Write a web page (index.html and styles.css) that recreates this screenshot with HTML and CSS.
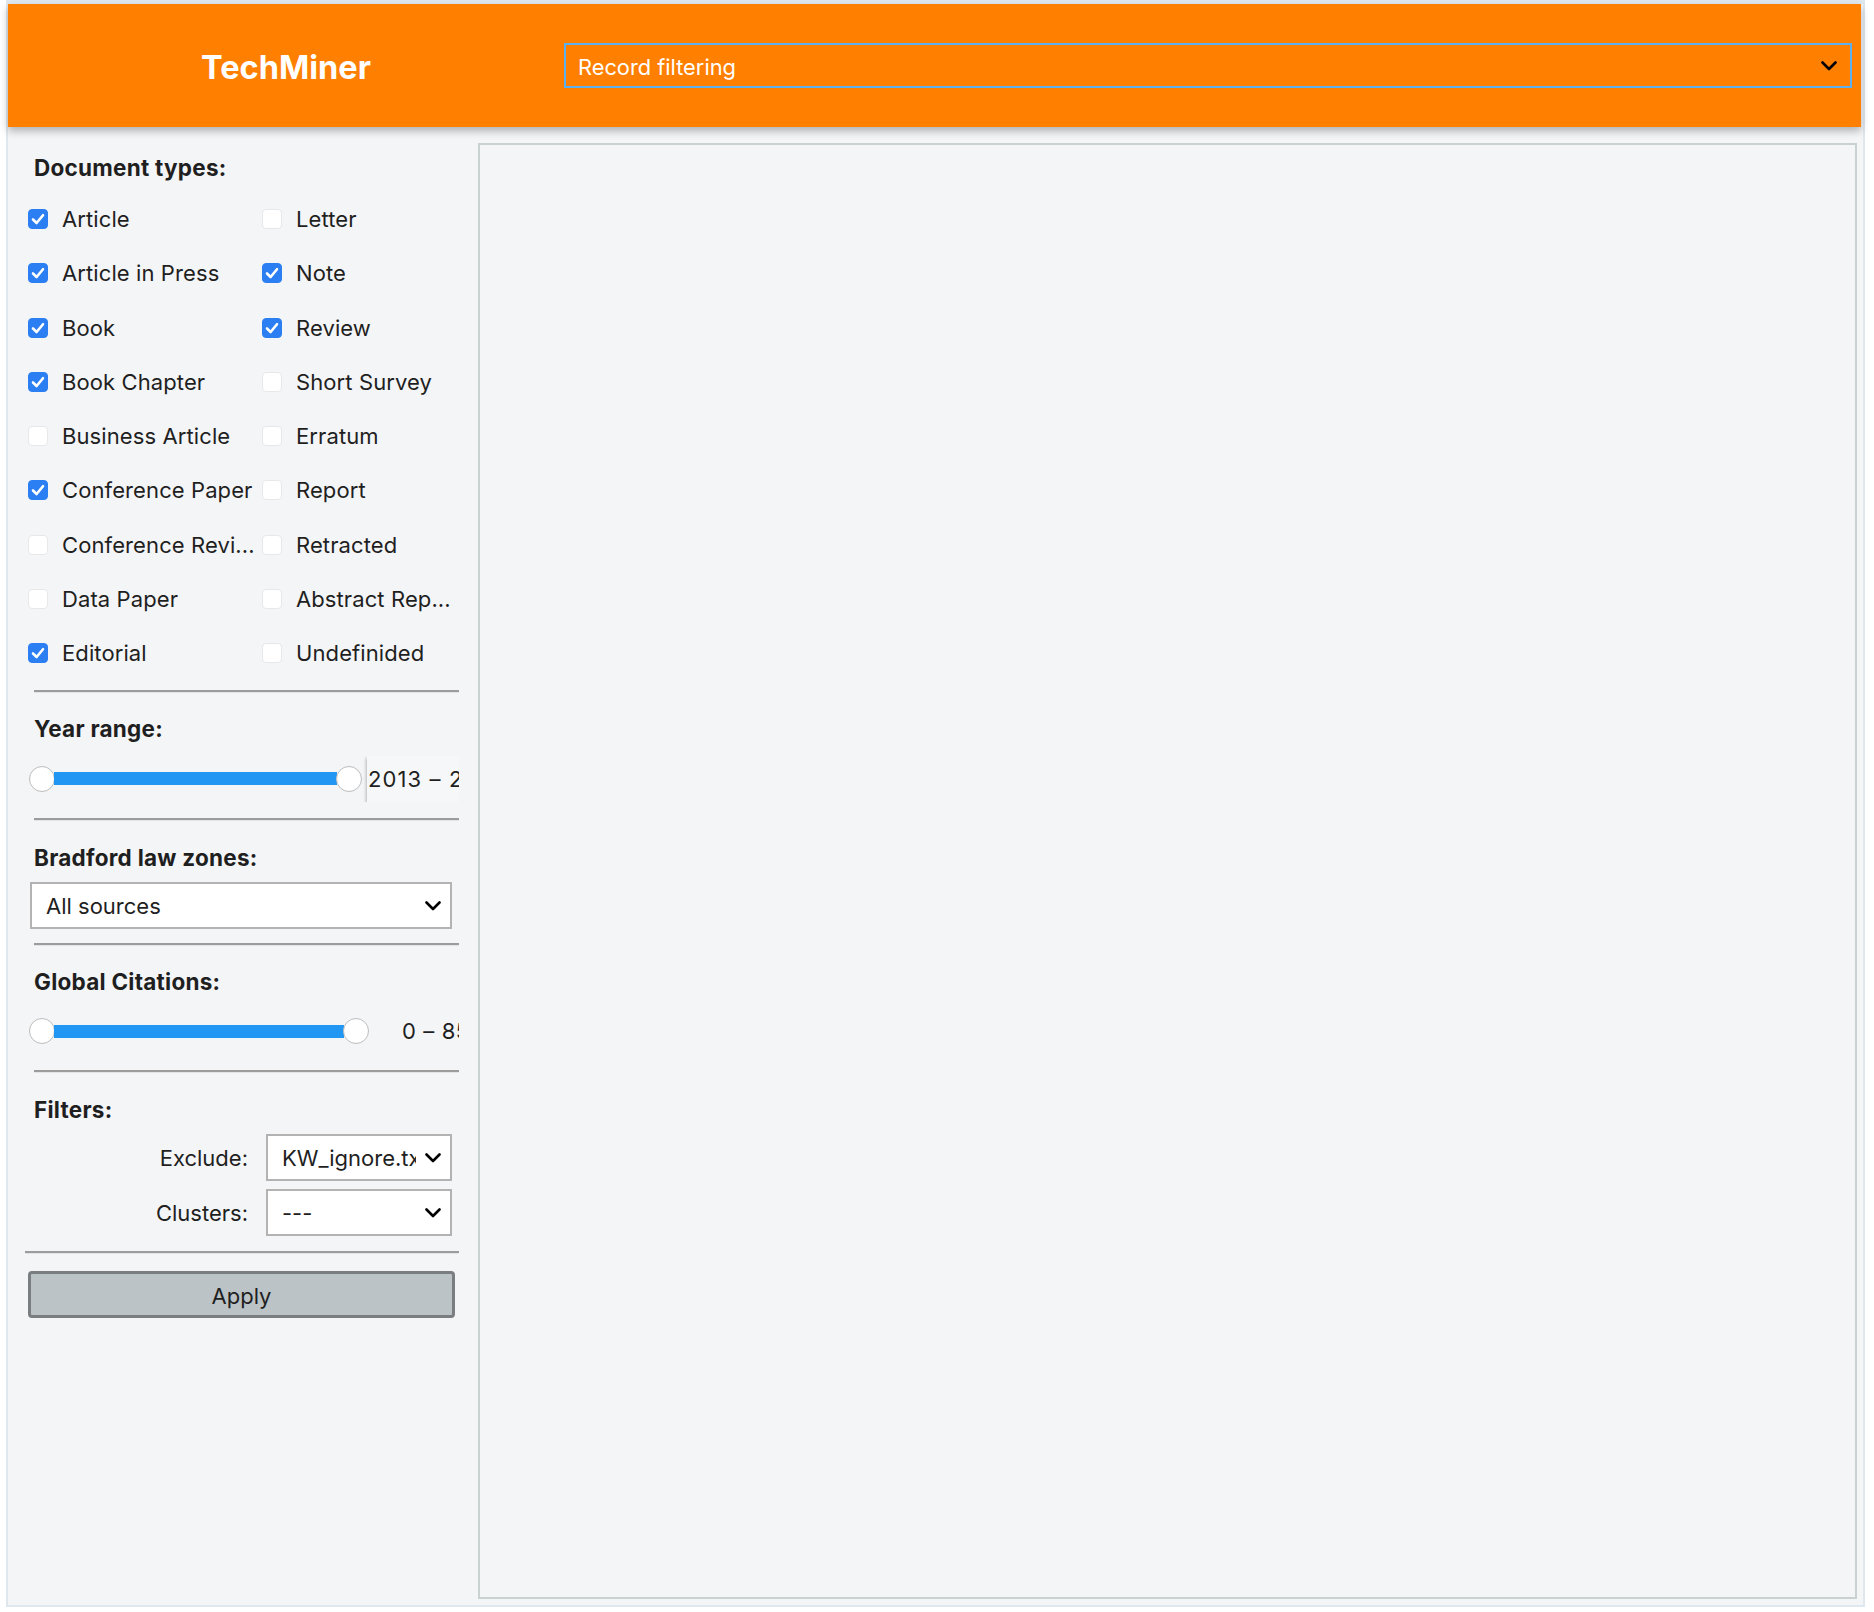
FILE: index.html
```html
<!DOCTYPE html>
<html lang="en">
<head>
<meta charset="utf-8">
<title>TechMiner</title>
<link rel="stylesheet" href="styles.css">
</head>
<body>
<div class="frame">
  <header class="header">
    <div class="brand">TechMiner</div>
    <div class="menu-select">
      <span class="menu-text">Record filtering</span>
      <svg class="chev" width="16" height="10" viewBox="0 0 16 10"><path d="M1.5 1.5 L8 8 L14.5 1.5" fill="none" stroke="#000" stroke-width="2.6" stroke-linecap="round" stroke-linejoin="round"/></svg>
    </div>
  </header>
  <div class="main">
    <aside class="sidebar">
      <div class="heading h-first">Document types:</div>
      <div class="types">
        <label class="opt"><span class="box on"><svg viewBox="0 0 20 20"><path d="M5 10.5 L8.6 14 L15 6.2" fill="none" stroke="#fff" stroke-width="2.6" stroke-linecap="round" stroke-linejoin="round"/></svg></span><span class="txt">Article</span></label>
        <label class="opt"><span class="box"></span><span class="txt">Letter</span></label>
        <label class="opt"><span class="box on"><svg viewBox="0 0 20 20"><path d="M5 10.5 L8.6 14 L15 6.2" fill="none" stroke="#fff" stroke-width="2.6" stroke-linecap="round" stroke-linejoin="round"/></svg></span><span class="txt">Article in Press</span></label>
        <label class="opt"><span class="box on"><svg viewBox="0 0 20 20"><path d="M5 10.5 L8.6 14 L15 6.2" fill="none" stroke="#fff" stroke-width="2.6" stroke-linecap="round" stroke-linejoin="round"/></svg></span><span class="txt">Note</span></label>
        <label class="opt"><span class="box on"><svg viewBox="0 0 20 20"><path d="M5 10.5 L8.6 14 L15 6.2" fill="none" stroke="#fff" stroke-width="2.6" stroke-linecap="round" stroke-linejoin="round"/></svg></span><span class="txt">Book</span></label>
        <label class="opt"><span class="box on"><svg viewBox="0 0 20 20"><path d="M5 10.5 L8.6 14 L15 6.2" fill="none" stroke="#fff" stroke-width="2.6" stroke-linecap="round" stroke-linejoin="round"/></svg></span><span class="txt">Review</span></label>
        <label class="opt"><span class="box on"><svg viewBox="0 0 20 20"><path d="M5 10.5 L8.6 14 L15 6.2" fill="none" stroke="#fff" stroke-width="2.6" stroke-linecap="round" stroke-linejoin="round"/></svg></span><span class="txt">Book Chapter</span></label>
        <label class="opt"><span class="box"></span><span class="txt">Short Survey</span></label>
        <label class="opt"><span class="box"></span><span class="txt">Business Article</span></label>
        <label class="opt"><span class="box"></span><span class="txt">Erratum</span></label>
        <label class="opt"><span class="box on"><svg viewBox="0 0 20 20"><path d="M5 10.5 L8.6 14 L15 6.2" fill="none" stroke="#fff" stroke-width="2.6" stroke-linecap="round" stroke-linejoin="round"/></svg></span><span class="txt">Conference Paper</span></label>
        <label class="opt"><span class="box"></span><span class="txt">Report</span></label>
        <label class="opt"><span class="box"></span><span class="txt">Conference Revi...</span></label>
        <label class="opt"><span class="box"></span><span class="txt">Retracted</span></label>
        <label class="opt"><span class="box"></span><span class="txt">Data Paper</span></label>
        <label class="opt"><span class="box"></span><span class="txt">Abstract Rep...</span></label>
        <label class="opt"><span class="box on"><svg viewBox="0 0 20 20"><path d="M5 10.5 L8.6 14 L15 6.2" fill="none" stroke="#fff" stroke-width="2.6" stroke-linecap="round" stroke-linejoin="round"/></svg></span><span class="txt">Editorial</span></label>
        <label class="opt"><span class="box"></span><span class="txt">Undefinided</span></label>
      </div>

      <div class="rule r1"></div>
      <div class="heading h-year">Year range:</div>
      <div class="slider-row s1">
        <div class="slider w1"><span class="knob"></span><span class="track"></span><span class="knob"></span></div>
        <div class="readout boxed">2013 – 2021</div>
      </div>

      <div class="rule r2"></div>
      <div class="heading h-brad">Bradford law zones:</div>
      <div class="select wide">
        <span>All sources</span>
        <svg class="chev" width="16" height="10" viewBox="0 0 16 10"><path d="M1.5 1.5 L8 8 L14.5 1.5" fill="none" stroke="#000" stroke-width="2.6" stroke-linecap="round" stroke-linejoin="round"/></svg>
      </div>

      <div class="rule r3"></div>
      <div class="heading h-glob">Global Citations:</div>
      <div class="slider-row s2">
        <div class="slider w2"><span class="knob"></span><span class="track"></span><span class="knob"></span></div>
        <div class="readout plain">0 – 855</div>
      </div>

      <div class="rule r4"></div>
      <div class="heading h-filt">Filters:</div>
      <div class="field f1">
        <span class="flabel">Exclude:</span>
        <div class="select narrow">
          <span class="clip">KW_ignore.txt</span>
          <svg class="chev" width="16" height="10" viewBox="0 0 16 10"><path d="M1.5 1.5 L8 8 L14.5 1.5" fill="none" stroke="#000" stroke-width="2.6" stroke-linecap="round" stroke-linejoin="round"/></svg>
        </div>
      </div>
      <div class="field f2">
        <span class="flabel">Clusters:</span>
        <div class="select narrow">
          <span class="clip">---</span>
          <svg class="chev" width="16" height="10" viewBox="0 0 16 10"><path d="M1.5 1.5 L8 8 L14.5 1.5" fill="none" stroke="#000" stroke-width="2.6" stroke-linecap="round" stroke-linejoin="round"/></svg>
        </div>
      </div>

      <div class="rule r5"></div>
      <button class="apply">Apply</button>
    </aside>
    <section class="panel"></section>
  </div>
</div>
</body>
</html>
```
FILE: styles.css
```css
html, body {
  margin: 0;
  padding: 0;
  background: #ffffff;
}
body {
  font-family: Inter, "Noto Sans", sans-serif;
  color: #1f1f1f;
}
.frame {
  margin-left: 6px;
  width: 1859px;
  height: 1607px;
  box-sizing: border-box;
  border: 2px solid #e0e8ef;
  border-top-width: 4px;
  background: #f4f5f7;
  display: flex;
  flex-direction: column;
}
.header {
  height: 123px;
  margin-right: 2px;
  background: #ff8000;
  display: flex;
  align-items: center;
  box-shadow: 0 4px 8px rgba(0, 0, 0, 0.28);
  position: relative;
  z-index: 2;
}
.brand {
  width: 556px;
  padding-top: 4px;
  text-align: center;
  color: #ffffff;
  font-weight: 700;
  font-size: 32.5px;
}
.menu-select {
  box-sizing: border-box;
  width: 1288px;
  height: 45px;
  border: 2px solid #5cb0f0;
  display: flex;
  align-items: center;
  justify-content: space-between;
  padding: 0 13px 0 12px;
  color: #ffffff;
  font-size: 21.8px;
}
.menu-text {
  padding-top: 3px;
}
.main {
  flex: 1;
  display: flex;
  min-height: 0;
}
.sidebar {
  width: 470px;
  box-sizing: border-box;
  padding: 27px 19px 0 20px;
  display: flex;
  flex-direction: column;
}
.panel {
  flex: 1;
  margin: 16px 6px 6px 0;
  border: 2px solid #c9d1d1;
  background: #f4f5f7;
}
.heading {
  font-weight: 700;
  font-size: 22.5px;
  letter-spacing: 0.25px;
  line-height: 28px;
  padding-left: 6px;
  color: #1f1f1f;
}
.types {
  margin-top: 10px;
  display: grid;
  grid-template-columns: 234px 1fr;
  grid-auto-rows: 54.25px;
}
.opt {
  display: flex;
  align-items: center;
  min-width: 0;
}
.box {
  flex: none;
  width: 20px;
  height: 20px;
  box-sizing: border-box;
  border-radius: 4px;
  background: #ffffff;
  border: 1px solid #e6e8ea;
  display: flex;
}
.box.on {
  background: #2b7ff3;
  border-color: #2b7ff3;
}
.box svg {
  width: 20px;
  height: 20px;
  margin: -1px;
}
.txt {
  margin-left: 14px;
  font-size: 22px;
  letter-spacing: 0.1px;
  color: #1f1f1f;
  white-space: nowrap;
}
.rule {
  height: 2px;
  margin-left: 6px;
  background: #9c9c9c;
  border-bottom: 1px solid #e2e4e6;
}
.r1 { margin-top: 10px; }
.r2 { margin-top: 16.5px; }
.r3 { margin-top: 14px; }
.r4 { margin-top: 16px; }
.r5 { margin-top: 14.5px; margin-left: -3px; }
.h-year { margin-top: 22px; }
.h-brad { margin-top: 23px; }
.h-glob { margin-top: 22px; }
.h-filt { margin-top: 22.5px; }

.slider-row {
  height: 46px;
  margin-top: 12.5px;
  display: flex;
  align-items: center;
  overflow: hidden;
}
.s2 { margin-top: 12px; }
.slider {
  flex: none;
  display: flex;
  align-items: center;
  margin-left: 1px;
}
.w1 { width: 333px; }
.w2 { width: 340px; }
.knob {
  flex: none;
  width: 26px;
  height: 26px;
  box-sizing: border-box;
  border-radius: 50%;
  background: #ffffff;
  border: 1.5px solid #bdbdbd;
}
.track {
  flex: 1;
  height: 13px;
  background: #2196f3;
  margin: 0 -1px;
}
.readout {
  flex: none;
  font-size: 22px;
  white-space: nowrap;
  color: #1f1f1f;
}
.readout.boxed {
  margin-left: 5px;
  height: 46px;
  width: 120px;
  line-height: 46px;
  letter-spacing: 1.1px;
  background: #f6f7f8;
  box-shadow: -1px 2px 3px rgba(0, 0, 0, 0.25);
  padding-left: 1px;
}
.readout.plain {
  margin-left: 33px;
  letter-spacing: 0.6px;
}
.select {
  box-sizing: border-box;
  height: 47px;
  background: #ffffff;
  border: 2px solid #b3b3b3;
  display: flex;
  align-items: center;
  justify-content: space-between;
  font-size: 22px;
  color: #1f1f1f;
}
.select.wide {
  margin-top: 10px;
  margin-left: 2px;
  width: 422px;
  padding: 0 9px 0 14px;
}
.select.narrow {
  width: 186px;
  padding: 0 9px 0 14px;
}
.clip {
  width: 134px;
  overflow: hidden;
  white-space: nowrap;
}
.field {
  height: 47px;
  display: flex;
  align-items: center;
}
.f1 { margin-top: 10.5px; }
.f2 { margin-top: 8px; }
.flabel {
  width: 220px;
  text-align: right;
  font-size: 22px;
  margin-right: 18px;
  color: #1f1f1f;
}
.apply {
  margin-top: 17.5px;
  width: 427px;
  height: 47px;
  box-sizing: border-box;
  background: #bcc3c6;
  border: 3px solid #7b7e80;
  border-radius: 4px;
  font-family: Inter, "Noto Sans", sans-serif;
  font-size: 22px;
  color: #1f1f1f;
  padding: 3px 0 0;
}
```
